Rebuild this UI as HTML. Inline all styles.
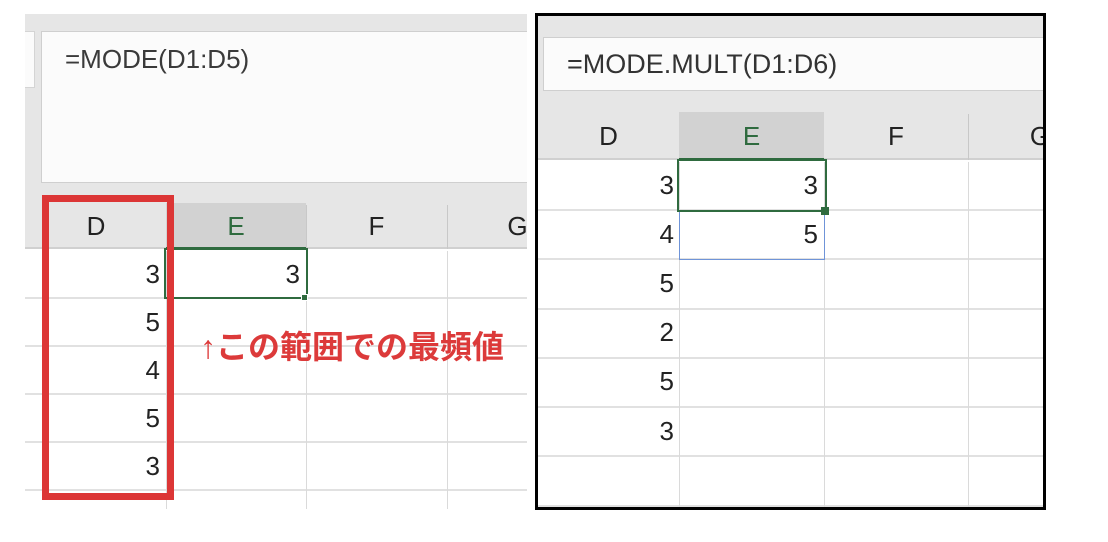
<!DOCTYPE html>
<html><head><meta charset="utf-8"><style>
*{margin:0;padding:0;box-sizing:border-box}
body{width:1108px;height:542px;background:#fff;position:relative;overflow:hidden;font-family:"Liberation Sans","Noto Sans CJK JP",sans-serif;color:#222}
.a{position:absolute}
.hl{position:absolute;height:2px;background:#e1e1e1}
.vl{position:absolute;width:1px;background:#dadada}
.t{position:absolute;font-size:26px;text-align:right;line-height:1}
.h{position:absolute;font-size:26px;text-align:center;line-height:1}
</style></head><body>
<!-- LEFT PANEL -->
<div class="a" style="left:25px;top:14px;width:502px;height:189px;background:#e6e6e6"></div>
<div class="a" style="left:25px;top:31px;width:10px;height:57px;background:#fbfbfb;border:1px solid #d4d4d4;border-left:none"></div>
<div class="a" style="left:41px;top:31px;width:486px;height:152px;background:#fbfbfb;border:1px solid #cfcfcf;border-right:none"></div>
<div class="a" style="left:65px;top:44px;font-size:26px;color:#3a3a3a">=MODE(D1:D5)</div>
<div class="a" style="left:25px;top:203px;width:502px;height:46px;background:#e6e6e6;border-bottom:2px solid #d0d0d0"></div>
<div class="a" style="left:166px;top:203px;width:140px;height:46px;background:#d2d2d2;border-bottom:2px solid #2f6b3f"></div>
<div class="vl" style="left:306px;top:205px;height:44px;background:#c8c8c8"></div>
<div class="vl" style="left:447px;top:205px;height:44px;background:#c8c8c8"></div>
<div class="h" style="left:26px;top:213px;width:140px">D</div>
<div class="h" style="left:166px;top:213px;width:140px;color:#2f6b3f">E</div>
<div class="h" style="left:306px;top:213px;width:141px">F</div>
<div class="h" style="left:447px;top:213px;width:141px">G</div>
<div class="a" style="left:25px;top:251px;width:502px;height:258px;background:#fff"></div>
<div class="hl" style="left:25px;width:502px;top:297px"></div>
<div class="hl" style="left:25px;width:502px;top:345px"></div>
<div class="hl" style="left:25px;width:502px;top:393px"></div>
<div class="hl" style="left:25px;width:502px;top:441px"></div>
<div class="hl" style="left:25px;width:502px;top:489px"></div>
<div class="vl" style="left:166px;top:251px;height:258px"></div>
<div class="vl" style="left:306px;top:251px;height:258px"></div>
<div class="vl" style="left:447px;top:251px;height:258px"></div>
<div class="a" style="left:164px;top:248px;width:144px;height:51px;border:2px solid #2f6b3f"></div>
<div class="a" style="left:301px;top:294px;width:7px;height:7px;background:#2f6b3f;border:1px solid #fff"></div>
<div class="t" style="left:60px;width:100px;top:261px">3</div>
<div class="t" style="left:200px;width:100px;top:261px">3</div>
<div class="t" style="left:60px;width:100px;top:309px">5</div>
<div class="t" style="left:60px;width:100px;top:357px">4</div>
<div class="t" style="left:60px;width:100px;top:405px">5</div>
<div class="t" style="left:60px;width:100px;top:453px">3</div>
<div class="a" style="left:42px;top:195px;width:132px;height:305px;border:7px solid #dc3636"></div>
<div class="a" style="left:200px;top:322px;font-size:32px;font-weight:bold;color:#dc3a3a;white-space:nowrap">↑この範囲での最頻値</div>
<!-- RIGHT PANEL -->
<div class="a" style="left:535px;top:13px;width:511px;height:497px;border:3px solid #000;background:#fff;overflow:hidden">
 <div class="a" style="left:0;top:0;width:510px;height:144px;background:#e6e6e6"></div>
 <div class="a" style="left:5px;top:21px;width:510px;height:54px;background:#fbfbfb;border:1px solid #cfcfcf"></div>
 <div class="a" style="left:29px;top:33px;font-size:27px;color:#333">=MODE.MULT(D1:D6)</div>
 <div class="a" style="left:0;top:96px;width:510px;height:48px;border-bottom:2px solid #d0d0d0"></div>
 <div class="a" style="left:141px;top:96px;width:145px;height:48px;background:#d2d2d2;border-bottom:2px solid #2f6b3f"></div>
 <div class="vl" style="left:430px;top:98px;height:46px;background:#c8c8c8"></div>
 <div class="h" style="left:0;top:107px;width:141px">D</div>
 <div class="h" style="left:141px;top:107px;width:145px;color:#2f6b3f">E</div>
 <div class="h" style="left:286px;top:107px;width:144px">F</div>
 <div class="h" style="left:430px;top:107px;width:144px">G</div>
 <div class="hl" style="left:0;width:510px;top:193px"></div>
 <div class="hl" style="left:0;width:510px;top:242px"></div>
 <div class="hl" style="left:0;width:510px;top:292px"></div>
 <div class="hl" style="left:0;width:510px;top:341px"></div>
 <div class="hl" style="left:0;width:510px;top:390px"></div>
 <div class="hl" style="left:0;width:510px;top:439px"></div>
 <div class="hl" style="left:0;width:510px;top:489px"></div>
 <div class="vl" style="left:141px;top:146px;height:350px"></div>
 <div class="vl" style="left:286px;top:146px;height:350px"></div>
 <div class="vl" style="left:430px;top:146px;height:350px"></div>
 <div class="a" style="left:141px;top:194px;width:146px;height:50px;border:1px solid #6f94d8"></div>
 <div class="a" style="left:139px;top:143px;width:150px;height:53px;border:2px solid #2f6b3f"></div>
 <div class="a" style="left:283px;top:191px;width:8px;height:8px;background:#2f6b3f"></div>
 <div class="t" style="left:36px;width:100px;top:156px">3</div>
 <div class="t" style="left:180px;width:100px;top:156px">3</div>
 <div class="t" style="left:36px;width:100px;top:205px">4</div>
 <div class="t" style="left:180px;width:100px;top:205px">5</div>
 <div class="t" style="left:36px;width:100px;top:254px">5</div>
 <div class="t" style="left:36px;width:100px;top:303px">2</div>
 <div class="t" style="left:36px;width:100px;top:352px">5</div>
 <div class="t" style="left:36px;width:100px;top:402px">3</div>
</div>
</body></html>
